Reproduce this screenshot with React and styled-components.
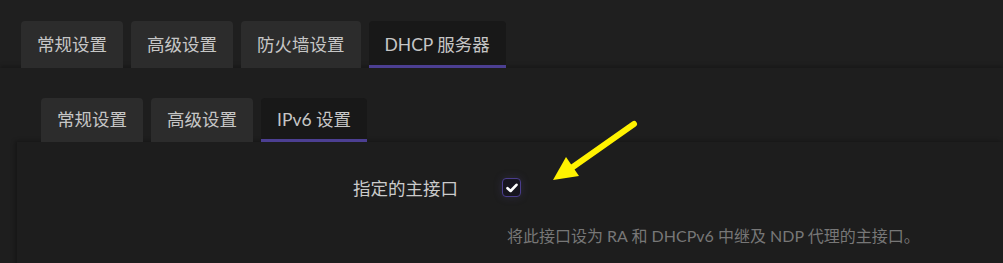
import React from 'react';
import styled, { createGlobalStyle } from 'styled-components';

const GlobalStyle = createGlobalStyle`
  html, body {
    margin: 0;
    background: #1f1f1f;
    font-family: 'Lato', 'Noto Sans CJK SC', sans-serif;
    overflow: hidden;
  }
`;

const Page = styled.div`
  position: relative;
  width: 1003px;
  height: 263px;
  padding-top: 21px;
  box-sizing: border-box;
  background: #1f1f1f;
`;

const TabBar = styled.ul`
  list-style: none;
  margin: 0 0 0 ${(p) => p.indent}px;
  padding: 0;
  display: flex;
  gap: 8px;
`;

const Tab = styled.li`
  height: ${(p) => p.height}px;
  box-sizing: border-box;
  padding: 0 16px;
  display: flex;
  align-items: center;
  font-size: 17.5px;
  color: #c6c6c6;
  background: ${(p) => (p.active ? '#181818' : '#2c2c2c')};
  border-radius: 4px 4px 0 0;
  border-bottom: 3px solid ${(p) => (p.active ? '#4c3f92' : 'transparent')};
`;

const Section = styled.div`
  background: #1e1e1e;
  box-shadow: 0 -2px 4px rgba(0, 0, 0, 0.25);
  padding: 30px 0 0 17px;
  height: 200px;
  box-sizing: border-box;
`;

const Panel = styled.div`
  background: #1d1d1d;
  box-shadow: -2px -1px 4px rgba(0, 0, 0, 0.3);
  height: 130px;
  padding-top: 33px;
  box-sizing: border-box;
`;

const FieldRow = styled.div`
  display: grid;
  grid-template-columns: 441px auto;
  column-gap: 44px;
  align-items: center;
`;

const Label = styled.label`
  text-align: right;
  font-size: 17.5px;
  color: #cbcbcb;
`;

const Check = styled.span`
  width: 19px;
  height: 19px;
  box-sizing: border-box;
  border: 1.5px solid #4a3d8c;
  border-radius: 4px;
  background: #17151f;
  display: flex;
  align-items: center;
  justify-content: center;
  box-shadow: 0 0 8px rgba(90, 80, 160, 0.25);
`;

const Description = styled.div`
  margin: 23px 0 0 490px;
  font-size: 16px;
  color: #777777;
`;

const Arrow = styled.svg`
  position: absolute;
  left: 540px;
  top: 110px;
`;

const topTabs = ['常规设置', '高级设置', '防火墙设置', 'DHCP 服务器'];
const subTabs = ['常规设置', '高级设置', 'IPv6 设置'];

export default function App() {
  return (
    <Page>
      <GlobalStyle />
      <TabBar indent={21}>
        {topTabs.map((t, i) => (
          <Tab key={t} height={47} active={i === 3}>
            {t}
          </Tab>
        ))}
      </TabBar>
      <Section>
        <TabBar indent={24}>
          {subTabs.map((t, i) => (
            <Tab key={t} height={44} active={i === 2}>
              {t}
            </Tab>
          ))}
        </TabBar>
        <Panel>
          <FieldRow>
            <Label>指定的主接口</Label>
            <Check>
              <svg width="12" height="10" viewBox="0 0 12 10">
                <path
                  d="M1.5 5.2 L4.6 8 L10.5 1.8"
                  fill="none"
                  stroke="#fff"
                  strokeWidth="2.6"
                  strokeLinecap="round"
                  strokeLinejoin="round"
                />
              </svg>
            </Check>
          </FieldRow>
          <Description>将此接口设为 RA 和 DHCPv6 中继及 NDP 代理的主接口。</Description>
        </Panel>
      </Section>
      <Arrow width="110" height="80" viewBox="0 0 110 80">
        <line x1="94" y1="14" x2="30" y2="59" stroke="#fff200" strokeWidth="6" strokeLinecap="round" />
        <polygon points="13,70 26,47 39,66" fill="#fff200" />
      </Arrow>
    </Page>
  );
}
